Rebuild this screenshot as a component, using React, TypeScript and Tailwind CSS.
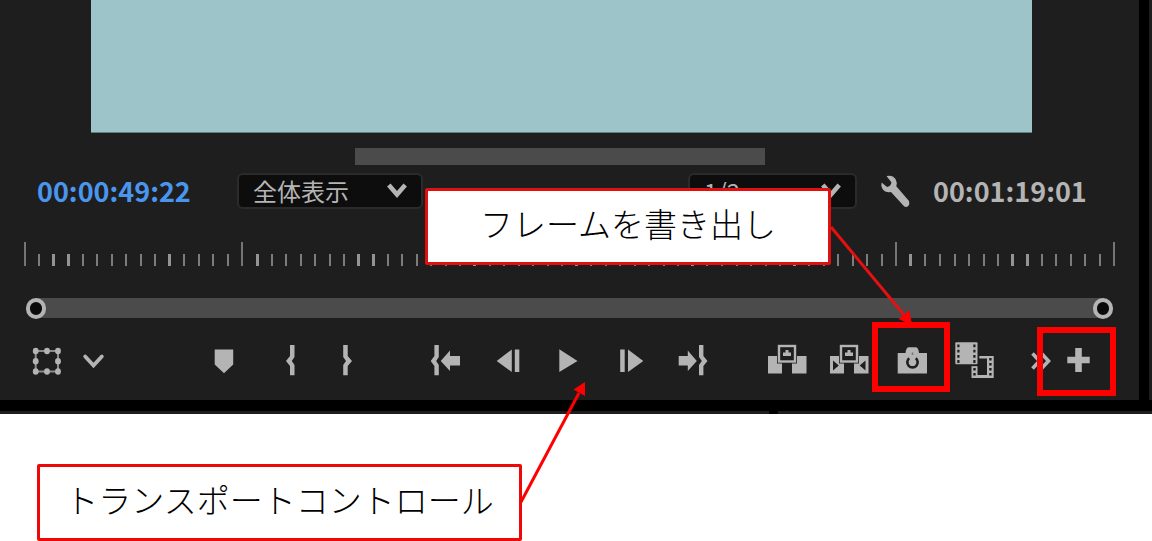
import { useState } from 'react';
import type { ReactNode } from 'react';

const TICK_COUNT = 76;
const MAJOR_EVERY = 15;
const heavyTicks = [2, 3, 10, 16, 23, 24, 31, 38, 45, 46, 53, 61, 68, 69];

const FG = '#b4b4b4';
const BG = '#1e1e1e';

function Glyph({ children }: { children: ReactNode }) {
  return (
    <svg viewBox="0 0 40 40" className="size-10 overflow-visible" fill={FG} aria-hidden="true">
      {children}
    </svg>
  );
}

function ToolButton({ label, children }: { label: string; children: ReactNode }) {
  return (
    <button type="button" aria-label={label} className="size-10 shrink-0">
      <Glyph>{children}</Glyph>
    </button>
  );
}

type ZoomSelectProps = {
  label: string;
  options: string[];
  className: string;
};

function ZoomSelect({ label, options, className }: ZoomSelectProps) {
  return (
    <div className={`relative ${className}`}>
      <select
        aria-label={label}
        className="h-9 w-full appearance-none rounded-md border-2 border-[#2b2b2b] bg-[#0d0d0d] pl-[14px] font-['Noto_Sans_CJK_JP',sans-serif] text-2xl leading-8 text-[#b4b4b4]"
      >
        {options.map((option) => (
          <option key={option}>{option}</option>
        ))}
      </select>
      <svg
        viewBox="0 0 20 16"
        className="pointer-events-none absolute top-[10px] right-4 h-4 w-5"
        fill="none"
        stroke={FG}
        strokeWidth="4.6"
        aria-hidden="true"
      >
        <path d="M1.8 2 L10 11.5 L18.2 2" />
      </svg>
    </div>
  );
}

function Ruler() {
  return (
    <div className="mt-[33px] mr-[22px] ml-[23px] flex h-6 items-end justify-between">
      {Array.from({ length: TICK_COUNT }, (_, i) => {
        const major = i % MAJOR_EVERY === 0;
        const heavy = heavyTicks.includes(i);
        return (
          <div key={i} className="flex w-[3px] justify-center">
            <div
              className={
                major
                  ? 'h-6 w-[2px] bg-[#757575]'
                  : heavy
                    ? 'h-3 w-[3px] bg-[#949494]'
                    : 'h-3 w-[2px] bg-[#7c7c7c]'
              }
            />
          </div>
        );
      })}
    </div>
  );
}

const rangeClass =
  'pointer-events-none absolute inset-0 h-5 w-full appearance-none bg-transparent [&::-webkit-slider-thumb]:pointer-events-auto [&::-webkit-slider-thumb]:h-[21px] [&::-webkit-slider-thumb]:w-5 [&::-webkit-slider-thumb]:appearance-none [&::-webkit-slider-thumb]:rounded-full [&::-webkit-slider-thumb]:border-4 [&::-webkit-slider-thumb]:border-[#b4b4b4] [&::-webkit-slider-thumb]:bg-[#0a0a0a]';

function RangeBar() {
  const [start, setStart] = useState(0);
  const [end, setEnd] = useState(100);

  return (
    <div className="relative mt-8 mr-[26px] ml-[26px] h-5">
      <div className="mx-[10px] h-5 bg-[#4b4b4b]" />
      <input
        type="range"
        aria-label="表示範囲の開始"
        className={rangeClass}
        value={start}
        onChange={(e) => setStart(Number(e.target.value))}
      />
      <input
        type="range"
        aria-label="表示範囲の終了"
        className={rangeClass}
        value={end}
        onChange={(e) => setEnd(Number(e.target.value))}
      />
    </div>
  );
}

function LiftBase() {
  return (
    <>
      <path d="M1 15 H15 V32.5 H1 Z M25 15 H39.5 V32.5 H25 Z" />
      <rect x="10" y="3" width="20" height="19.5" fill={BG} />
      <rect x="12" y="5" width="16" height="15.5" fill={BG} stroke={FG} strokeWidth="2.4" />
      <path d="M16 11.5 H18.5 V9 H21.5 V11.5 H24 V15 H16 Z" />
    </>
  );
}

function Transport() {
  return (
    <div className="mt-[23px] flex items-center pr-[41px] pb-[19px] pl-[27px]">
      <div className="flex gap-[6px]">
        <ToolButton label="トランスフォーム">
          <rect x="8.7" y="10" width="22.3" height="20.5" fill="none" stroke="#8a8a8a" strokeWidth="2" />
          {[8.7, 20, 31].map((x) =>
            [10, 20.3, 30.5].map((y) =>
              x === 20 && y === 20.3 ? null : <ellipse key={`${x}-${y}`} cx={x} cy={y} rx="2.9" ry="3.2" />,
            ),
          )}
        </ToolButton>
        <ToolButton label="オプション">
          <path d="M12.2 15.5 L20.5 24.5 L28.8 15.5" fill="none" stroke={FG} strokeWidth="3.8" strokeLinecap="round" />
        </ToolButton>
      </div>

      <div className="grow-[91]" />
      <div className="flex items-center">
        <ToolButton label="マーカーを追加">
          <path d="M10.7 8.5 H29.2 V23.5 L20 32.3 L10.7 23.5 Z" />
        </ToolButton>
        <div className="ml-[27px] flex gap-4">
          <ToolButton label="インをマーク">
            <path d="M23.5 4 H19 V15 L15 20 L19 25 V34.3 H23.5 V24 L20.8 20 L23.5 16 Z" />
          </ToolButton>
          <ToolButton label="アウトをマーク">
            <path d="M16.2 4 H20.7 V15 L25 20 L20.7 25 V34.3 H16.2 V24 L19 20 L16.2 16 Z" />
          </ToolButton>
        </div>
      </div>

      <div className="grow-[58]" />
      <div className="flex gap-[22px]">
        <ToolButton label="インへ移動">
          <path d="M13.8 4 H9.4 V15 L5.7 20 L9.4 25 V34.3 H13.8 V24 L11.2 20 L13.8 16 Z" />
          <path d="M15.7 20 L25 9.5 V15 H35 V24.5 H25 V30 Z" />
        </ToolButton>
        <ToolButton label="1 フレーム前へ">
          <path d="M9.7 20 L24.8 8.5 V31 Z M27.8 8.5 H32.3 V31 H27.8 Z" />
        </ToolButton>
        <ToolButton label="再生">
          <path d="M10.3 8.3 L28.5 20 L10.3 31 Z" />
        </ToolButton>
        <ToolButton label="1 フレーム先へ">
          <path d="M9.2 8.5 H13.7 V31 H9.2 Z M17 8.5 L32.3 20 L17 31 Z" />
        </ToolButton>
        <ToolButton label="アウトへ移動">
          <path d="M23.8 20 L14.8 9.5 V15 H5.7 V24.5 H14.8 V30 Z" />
          <path d="M26 4 H30.4 V15 L34.5 20 L30.4 25 V34.3 H26 V24 L28.8 20 L26 16 Z" />
        </ToolButton>
      </div>

      <div className="grow-[54]" />
      <div className="flex gap-[22px]">
        <ToolButton label="リフト">
          <LiftBase />
        </ToolButton>
        <ToolButton label="抽出">
          <LiftBase />
          <path d="M4 19.5 L9.8 24.5 L4 29.5 Z M36.5 19.5 L30.7 24.5 L36.5 29.5 Z" fill={BG} />
        </ToolButton>
        <ToolButton label="フレームを書き出し">
          <path d="M6.7 12 H14.5 Q15 6.2 18 6.2 H24.5 Q27.5 6.2 28 12 H36 V32.5 H6.7 Z" />
          <path d="M18.2 17.2 A5.2 5.2 0 1 0 24.8 17.2" fill="none" stroke={BG} strokeWidth="2.6" />
          <path d="M21.5 11.5 V14" stroke="#777" strokeWidth="1.6" />
        </ToolButton>
        <ToolButton label="プロキシの切り替え">
          <path
            fillRule="evenodd"
            d="M18.5 15 H40.7 V37 H18.5 Z M24.5 17.5 H34 V34 H24.5 Z"
          />
          <path
            d="M21.5 27 V36 M37.4 17 V36"
            stroke={BG}
            strokeWidth="2.4"
            strokeDasharray="2.6 2.4"
          />
          <rect x="1" y="0" width="25.3" height="25.2" fill={BG} />
          <rect x="2.3" y="1.2" width="22.2" height="22" rx="1" />
          <path d="M5.4 3.5 V22 M21.4 3.5 V22" stroke={BG} strokeWidth="2.2" strokeDasharray="2.8 2.4" />
        </ToolButton>
      </div>

      <div className="grow-[25]" />
      <div className="flex">
        <ToolButton label="その他のボタン">
          <path
            d="M14.5 12.5 L21.5 20 L14.5 27.5 M23.5 12.5 L30.5 20 L23.5 27.5"
            fill="none"
            stroke={FG}
            strokeWidth="3.6"
          />
        </ToolButton>
        <ToolButton label="ボタンエディター">
          <path d="M17.2 7 H23.8 V15.8 H31.7 V22.2 H23.8 V31 H17.2 V22.2 H9.3 V15.8 H17.2 Z" />
        </ToolButton>
      </div>
    </div>
  );
}

function Monitor() {
  return (
    <section className="bg-black">
      <div className="flex">
        <div className="min-w-0 flex-1 bg-[#1e1e1e]">
          <div className="mr-[107px] ml-[91px] h-[133px] border-b border-[#5f7f84] bg-[#9dc5c9]" />
          <div className="mt-[15px] ml-[31.2%] h-[17px] w-[36%] bg-[#4b4b4b]" />

          <div className="mt-2 flex items-center pr-14 pl-[37px] font-['Noto_Sans_CJK_JP',sans-serif]">
            <span className="w-[150px] text-[27px] leading-9 font-bold whitespace-nowrap text-[#4a96ee]">
              00:00:49:22
            </span>
            <ZoomSelect label="ズームレベル" options={['全体表示', '50%', '100%']} className="ml-[50px] w-[186px]" />
            <div className="flex-1" />
            <ZoomSelect label="再生時の解像度" options={['1/2', '1/4', 'フル画質']} className="w-[169px]" />
            <button type="button" aria-label="設定" className="ml-[23px] h-[34px] w-[30px]">
              <svg viewBox="0 0 30 34" className="h-[34px] w-[30px]" fill={FG} aria-hidden="true">
                <path d="M6.5 2 Q12.5 0.5 15.5 5 Q17.5 8.5 16.3 12.3 L29 27 Q30 30 28.3 32 Q26 34 23.8 32 L11 18 Q5.5 19 2.6 15 Q0.6 12 1.6 8.6 L7 13 Q10.5 12.5 11.5 8.5 Z" />
              </svg>
            </button>
            <span className="ml-[23px] w-[150px] text-[27px] leading-9 font-bold whitespace-nowrap text-[#b4b4b4]">
              00:01:19:01
            </span>
          </div>

          <Ruler />
          <RangeBar />
          <Transport />
        </div>
        <div className="ml-[10px] w-[3px] bg-[#1e1e1e]" />
      </div>
      <div className="flex h-[14px] gap-[9px] pt-[11px]">
        <div className="grow-[769] bg-[#1e1e1e]" />
        <div className="grow-[374] bg-[#1e1e1e]" />
      </div>
    </section>
  );
}

const calloutClass =
  "absolute flex h-[77px] items-center justify-center rounded-xs border-3 bg-white pb-2 font-['Noto_Sans_CJK_JP',sans-serif] text-[33px] leading-10 font-light whitespace-nowrap text-black";

function Annotations() {
  return (
    <div className="pointer-events-none absolute inset-0">
      <svg className="absolute top-0 left-0 h-[541px] w-[1152px]" aria-hidden="true">
        <path d="M831 227 L905 316" stroke="#e51010" strokeWidth="3" />
        <path d="M912 325 L898.5 319 L909.5 310.5 Z" fill="#f00" />
        <path d="M521 502 L579 393" stroke="#f00" strokeWidth="3" />
        <path d="M585 382 L573.5 389.5 L585 396 Z" fill="#f00" />
      </svg>
      <p className={`${calloutClass} top-[188px] left-[425px] w-[406px] border-[#e01010]`}>フレームを書き出し</p>
      <p className={`${calloutClass} top-[464px] left-[37px] w-[485px] border-[#ee0808]`}>
        トランスポートコントロール
      </p>
      <div className="absolute top-[322px] left-[872px] h-[70px] w-[78px] border-6 border-[#f00]" />
      <div className="absolute top-[327px] left-[1037px] h-[69px] w-[79px] border-6 border-[#f00]" />
    </div>
  );
}

function App() {
  return (
    <main className="relative min-h-screen overflow-hidden bg-white">
      <Monitor />
      <Annotations />
    </main>
  );
}

export default App;
